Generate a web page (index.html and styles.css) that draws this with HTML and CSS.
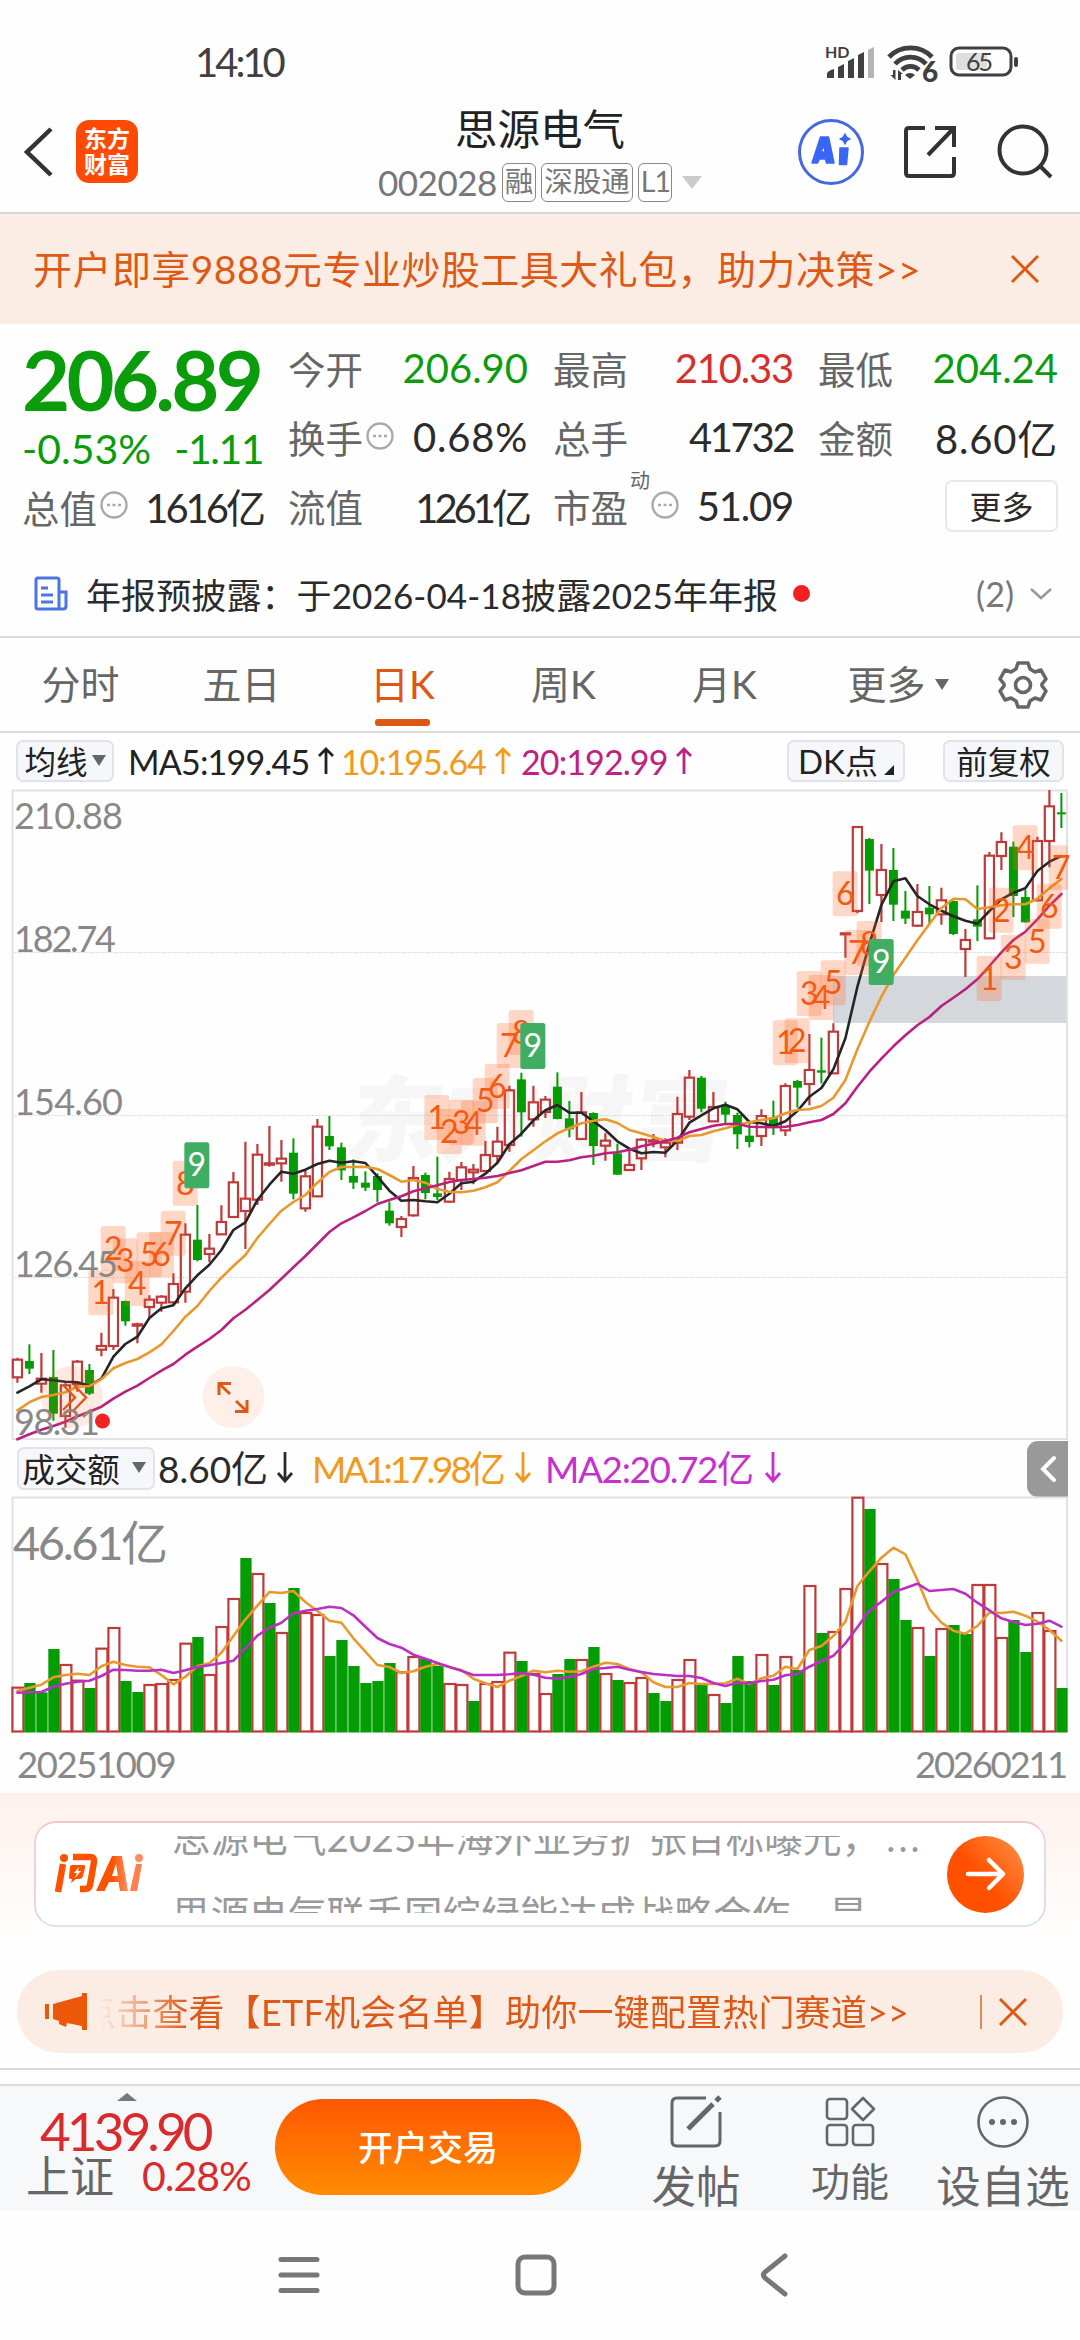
FILE: index.html
```html
<!DOCTYPE html>
<html lang="zh-CN">
<head>
<meta charset="utf-8">
<title>思源电气 002028</title>
<link rel="stylesheet" href="styles.css">
</head>
<body>
<div class="screen">
  <div class="status">
    <span class="clock">14:10</span>
    <svg class="status-icons" width="200" height="44" viewBox="820 40 200 44">
      <text x="825" y="58" class="hd">HD</text>
      <g fill="#404040">
        <path d="M827 74q0-3 7-5v9h-7zM838 67l6-3v14h-6zM848 61l6-3v20h-6zM858 55l6-3v26h-6z"/>
        <path d="M868 50l6-3v31h-6z" fill="#b5b5b5"/>
        <path d="M905 75l5 4 5-4a7 7 0 0 0-10 0z"/>
        <path d="M893 70h2.500v10l-5-5h2.500zM898 80v-10l5 4h-2v6z"/>
      </g>
      <g fill="none" stroke="#404040" stroke-width="4.800">
        <path d="M889 57a30 30 0 0 1 43 0"/><path d="M895 64a21 21 0 0 1 31 0"/><path d="M902 70a12 12 0 0 1 17 0"/>
      </g>
      <text x="922" y="82" class="six">6</text>
      <rect x="951" y="48" width="60" height="27" rx="8" fill="none" stroke="#404040" stroke-width="3"/>
      <rect x="956" y="53" width="31" height="17" rx="3" fill="#dedede"/>
      <rect x="1014" y="57" width="4" height="10" rx="2" fill="#404040"/>
      <text x="966" y="71" class="batt" textLength="27">65</text>
    </svg>
  </div>

  <header class="top">
    <svg class="back" width="34" height="54" viewBox="0 0 34 54"><path d="M30 4L6 27L30 50" fill="none" stroke="#333" stroke-width="4.500"/></svg>
    <div class="logo"><span>东方</span><span>财富</span></div>
    <div class="title">
      <h1>思源电气</h1>
      <div class="code"><span class="num">002028</span><i>融</i><i>深股通</i><i class="l1">L1</i><svg width="20" height="13" viewBox="0 0 20 13"><path d="M0 0H20L10 13z" fill="#ccc"/></svg></div>
    </div>
    <svg class="tools" width="260" height="70" viewBox="796 116 260 70">
      <circle cx="831" cy="152" r="31.500" fill="#fff" stroke="#4468e4" stroke-width="3"/>
      <g fill="#3967f5" stroke="#3967f5" stroke-width="1.500" stroke-linejoin="round"><path fill-rule="evenodd" d="M812 163l8.500-26h8l5.500 26h-7.500l-1-4h-6l-2 4zM821 152h4l-1-7z"/><path d="M840 148h8l-1.500 16.500h-7z"/><path d="M845 134q1 4 5 5q-4 1-5 5q-1-4-5-5q4-1 5-5z"/></g>
      <g fill="none" stroke="#333" stroke-width="4"><path d="M925 128H909q-3 0-3 3V173q0 3 3 3H951q3 0 3-3V157M935 128H954V147M953 129L928 155"/><circle cx="1023" cy="150" r="23.500"/><path d="M1039 165L1051 177"/></g>
    </svg>
  </header>

  <div class="promo"><span>开户即享9888元专业炒股工具大礼包，助力决策&gt;&gt;</span><svg width="30" height="30" viewBox="0 0 30 30"><path d="M2 2L28 28M28 2L2 28" stroke="#dd5a16" stroke-width="3"/></svg></div>

  <section class="quote">
    <div class="price">
      <b class="down">206.89</b>
      <div class="chg down"><span>-0.53%</span><span>-1.11</span></div>
      <div class="cell"><label>总值</label><svg class="dots" viewBox="0 0 28 28"><circle cx="14" cy="14" r="12.500"/><path d="M7 14h3M12.500 14h3M18 14h3"/></svg><em class="tighter">1616亿</em></div>
    </div>
    <div class="cells">
      <div class="cell"><label>今开</label><em class="down">206.90</em></div>
      <div class="cell"><label>最高</label><em class="up slim">210.33</em></div>
      <div class="cell"><label>最低</label><em class="down">204.24</em></div>
      <div class="cell"><label>换手</label><svg class="dots" viewBox="0 0 28 28"><circle cx="14" cy="14" r="12.500"/><path d="M7 14h3M12.500 14h3M18 14h3"/></svg><em class="loose">0.68%</em></div>
      <div class="cell"><label>总手</label><em class="tight">41732</em></div>
      <div class="cell"><label>金额</label><em class="loose">8.60亿</em></div>
      <div class="cell"><label>流值</label><em class="tightest">1261亿</em></div>
      <div class="cell"><label>市盈<sup>动</sup></label><svg class="dots" viewBox="0 0 28 28"><circle cx="14" cy="14" r="12.500"/><path d="M7 14h3M12.500 14h3M18 14h3"/></svg><em class="slim">51.09</em></div>
      <div class="cell end"><button class="more">更多</button></div>
    </div>
  </section>

  <div class="notice">
    <svg width="34" height="36" viewBox="0 0 34 36"><g fill="none" stroke="#4d74e4" stroke-width="3"><path d="M25 33V4q0-2-2-2H4q-2 0-2 2V31q0 2 2 2H29q3 0 3-3V16H25M7 12h7M7 19h12M7 26h12"/></g></svg>
    <span class="notice-text">年报预披露：于2026-04-18披露2025年年报</span><span class="dot"></span>
    <span class="count">(2)</span>
    <svg width="22" height="12" viewBox="0 0 22 12"><path d="M1 1L11 10L21 1" fill="none" stroke="#999" stroke-width="2.500"/></svg>
  </div>

  <nav class="tabs">
    <span>分时</span><span>五日</span><span class="on">日K</span><span>周K</span><span>月K</span>
    <span class="tab-more">更多<svg width="14" height="11" viewBox="0 0 14 11"><path d="M0 0H14L7 11z" fill="#666"/></svg></span>
    <svg class="gear" width="50" height="50" viewBox="-25 -25 50 50"><g fill="none" stroke="#666" stroke-width="3.600" stroke-linejoin="round"><circle r="7.500"/><path d="M-5-22H5L7-16L12-13L18-15L23-6L19-1V1L23 6L18 15L12 13L7 16L5 22H-5L-7 16L-12 13L-18 15L-23 6L-19 1V-1L-23-6L-18-15L-12-13L-7-16z"/></g></svg>
  </nav>

  <div class="ind">
    <span class="chip c1">均线<svg width="14" height="11" viewBox="0 0 14 11"><path d="M0 0H14L7 11z" fill="#666"/></svg></span>
    <span class="ma m5">MA5:199.45<svg class="arr" viewBox="0 0 16 28"><path d="M8 27V2M1 9L8 2L15 9"/></svg></span>
    <span class="ma m10">10:195.64<svg class="arr" viewBox="0 0 16 28"><path d="M8 27V2M1 9L8 2L15 9"/></svg></span>
    <span class="ma m20">20:192.99<svg class="arr" viewBox="0 0 16 28"><path d="M8 27V2M1 9L8 2L15 9"/></svg></span>
    <span class="chip c2">DK点<svg width="10" height="10" viewBox="0 0 10 10"><path d="M10 0V10H0z" fill="#222"/></svg></span>
    <span class="chip c3">前复权</span>
  </div>

  <svg id="kline" class="chart" width="1080" height="652" viewBox="0 789 1080 652"></svg>

  <div class="volhead">
    <span class="chip c4">成交额<svg width="14" height="11" viewBox="0 0 14 11"><path d="M0 0H14L7 11z" fill="#666"/></svg></span>
    <span class="ma v0">8.60亿<svg class="arr" viewBox="0 0 16 32"><path d="M8 1V30M1 22L8 30L15 22"/></svg></span>
    <span class="ma v1">MA1:17.98亿<svg class="arr" viewBox="0 0 16 32"><path d="M8 1V30M1 22L8 30L15 22"/></svg></span>
    <span class="ma v2">MA2:20.72亿<svg class="arr" viewBox="0 0 16 32"><path d="M8 1V30M1 22L8 30L15 22"/></svg></span>
    <span class="fold"><svg width="16" height="26" viewBox="0 0 16 26"><path d="M14 2L3 13L14 24" fill="none" stroke="#fff" stroke-width="4" stroke-linecap="round"/></svg></span>
  </div>
  <svg id="volume" class="chart" width="1080" height="238" viewBox="0 1496 1080 238"></svg>
  <div class="dates"><span>20251009</span><span class="to">20260211</span></div>

  <section class="ask">
    <div class="ask-card">
      <svg width="92" height="44" viewBox="53 1852 92 44">
        <defs><linearGradient id="g" x1="0" y1="0" x2="1" y2="0"><stop offset=".5" stop-color="#fb5200"/><stop offset="1" stop-color="#ff9060"/></linearGradient></defs>
        <g fill="none" stroke="#fb5200" stroke-width="6.500"><path d="M63 1864L58 1892"/><path d="M73 1857H90Q95 1857 94 1862L90 1885Q89 1889 85 1889H80"/></g>
        <circle cx="64" cy="1858" r="4" fill="#fb5200"/>
        <path d="M70 1867q0-2 2-2h11q3 0 2 3l-2 8q-1 3-4 3h-3l-5 4 1-4h-1q-3 0-2-3z" fill="#fb5200"/><path d="M79 1867l-5 6h3l-2 5 6-7h-3z" fill="#fff"/>
        <path fill="url(#g)" fill-rule="evenodd" d="M96 1891L112 1856H122L128 1891H120L118.500 1882H109L104.500 1891zM112 1876H118L116 1864z"/>
        <path d="M136 1864h6L137 1891h-7z" fill="#ff8048"/><circle cx="139" cy="1858" r="4" fill="#ff8c5c"/>
      </svg>
      <div class="ticker"><p>思源电气2025年海外业务扩张目标曝光，<span>...</span></p><p>思源电气联手国综绿能达成战略合作，是</p></div>
      <div class="go"><svg width="42" height="36" viewBox="0 0 42 36"><path d="M3 18H37M24 4L38 18L24 32" fill="none" stroke="#fff" stroke-width="4.500" stroke-linecap="round" stroke-linejoin="round"/></svg></div>
    </div>
    <div class="etf">
      <svg width="44" height="40" viewBox="0 0 44 40"><path fill="#ec5808" d="M0 12h4v15H0zM8 12L37 4V1h5v37h-5v-4l-15-3-1 4-7-3V29L8 27z"/></svg>
      <div class="etf-text">点击查看【ETF机会名单】助你一键配置热门赛道&gt;&gt;</div>
      <span class="bar"></span>
      <svg width="30" height="30" viewBox="0 0 30 30"><path d="M2 2L28 28M28 2L2 28" stroke="#dd5a16" stroke-width="3"/></svg>
    </div>
  </section>

  <footer class="bottom">
    <div class="index">
      <svg width="20" height="8" viewBox="0 0 20 8"><path d="M0 8L10 0L20 8z" fill="#777"/></svg>
      <div class="idx-value">4139.90</div>
      <div class="idx-row"><span>上证</span><em>0.28%</em></div>
    </div>
    <button class="trade">开户交易</button>
    <div class="act a1"><svg width="54" height="54" viewBox="0 0 54 54"><g fill="none" stroke="#666" stroke-width="3"><path d="M37 3H8Q3 3 3 8V46Q3 51 8 51H46Q51 51 51 46V17"/><path d="M19 34L44 9" stroke-width="5"/><path d="M47 6L51 2" stroke-width="5"/></g></svg><span>发帖</span></div>
    <div class="act a2"><svg width="54" height="54" viewBox="0 0 54 54"><g fill="none" stroke="#666" stroke-width="2.600"><rect x="4" y="4" width="20" height="20" rx="3"/><rect x="4" y="30" width="20" height="20" rx="3"/><rect x="30" y="30" width="20" height="20" rx="3"/><path d="M40 3L51 14L40 25L29 14z" stroke-linejoin="round"/></g></svg><span>功能</span></div>
    <div class="act a3"><svg width="54" height="54" viewBox="0 0 54 54"><circle cx="27" cy="27" r="24.500" fill="none" stroke="#666" stroke-width="2.600"/><g fill="#666"><circle cx="16" cy="27" r="3"/><circle cx="27" cy="27" r="3"/><circle cx="38" cy="27" r="3"/></g></svg><span>设自选</span></div>
  </footer>

  <div class="sysnav">
    <svg width="40" height="42" viewBox="0 0 40 42"><path d="M2 5.500H38M2 21H38M2 36.500H38"/></svg>
    <svg width="42" height="42" viewBox="0 0 42 42"><rect x="3" y="3" width="36" height="36" rx="7"/></svg>
    <svg width="28" height="42" viewBox="0 0 28 42"><path d="M25 2L5 18Q2 21 5 24L25 40"/></svg>
  </div>
</div>
<script src="chart.js"></script>
</body>
</html>
```
FILE: styles.css
```css
* { box-sizing: border-box; margin: 0; padding: 0; }
body { background: #fefefe; color: #2b2b2b; font-family: Lato, "Noto Sans CJK SC", sans-serif; }
em, i { font-style: normal; }
button { font-family: inherit; color: inherit; border: 0; }
svg { display: block; flex: none; overflow: visible; }
.screen { width: 1080px; height: 2340px; overflow: hidden; white-space: nowrap; }
.down { color: #0a9c0a; }
.up { color: #d6302e; }

.status { height: 100px; padding: 40px 60px 0 195px; display: flex; justify-content: space-between; }
.clock { font-size: 40px; line-height: 44px; color: #404040; letter-spacing: -3px; }
.status-icons text { fill: #404040; }
.hd { font: 700 16px Lato, sans-serif; }
.six { font: 900 28px Lato, sans-serif; }
.batt { font: 25px Lato, sans-serif; }

.top { height: 114px; border-bottom: 2px solid #d8d8d8; display: grid; grid-template-columns: 76px 62px 682px 236px; align-items: start; }
.back { margin: 25px 0 0 21px; }
.logo { width: 62px; height: 63px; margin-top: 20px; border-radius: 13px; background: #ff4a05; color: #fff; font-size: 23px; font-weight: 700; line-height: 26px; padding-top: 5px; text-align: center; display: flex; flex-direction: column; }
.title { width: 560px; margin-left: 122px; display: flex; flex-direction: column; align-items: center; }
.title h1 { font-weight: 400; font-size: 42.500px; line-height: 58px; color: #222; }
.code { display: flex; align-items: center; gap: 5px; font-size: 35px; line-height: 39px; margin-top: 5px; color: #777; }
.code .num { letter-spacing: -.5px; }
.code i { border: 1.5px solid #888; border-radius: 6px; font-size: 28.500px; line-height: 35px; height: 39px; padding: 0 2px; }
.code .l1 { letter-spacing: -1px; padding: 0 1px 0 2px; }
.code svg { margin-left: 5px; }
.tools { margin: 16px 0 0 -24px; width: 260px; }

.promo { height: 110px; padding: 0 40px 0 33px; display: flex; align-items: center; justify-content: space-between; background: #fcede4; color: #dd5a16; font-size: 39px; letter-spacing: .45px; }
.promo span { padding-bottom: 4px; }

.quote { height: 222px; display: grid; grid-template-columns: 241px 1fr; column-gap: 25px; padding: 9px 21px 0 22px; }
.price b { display: block; font-size: 83px; line-height: 92px; letter-spacing: -3.7px; font-weight: 700; }
.chg { display: flex; justify-content: space-between; font-size: 41px; line-height: 48px; margin-bottom: 8px; }
.chg span:last-child { letter-spacing: -1.5px; }
.cells { display: grid; grid-template-columns: 240px 240px 240px; column-gap: 25px; grid-template-rows: 69px 69px 69px; }
.cell { display: flex; align-items: center; height: 69px; font-size: 40px; }
.price .cell { height: 50px; }
.cell label { font-size: 37.500px; color: #666; position: relative; }
.cell sup { position: absolute; left: 77px; top: -10px; font-size: 20px; line-height: 24px; }
.cell em { margin-left: auto; }
.cell .loose { letter-spacing: .8px; }
.cell .slim { letter-spacing: -1.2px; }
.cell .tight { letter-spacing: -2.4px; }
.cell .tighter { letter-spacing: -3px; }
.cell .tightest { letter-spacing: -4px; }
.dots { width: 28px; height: 28px; margin: 0 0 2px 3px; fill: none; stroke: #aaa; stroke-width: 2.400; }
.cell label:has(sup) + .dots { margin-left: 23px; }
.end { justify-content: flex-end; }
.more { width: 113px; height: 52px; border: 2px solid #e8e8e8; border-radius: 7px; background: #fff; font-size: 32px; padding-bottom: 3px; }

.notice { height: 92px; border-bottom: 2px solid #dcdcdc; padding: 5px 28px 0 34px; display: flex; align-items: center; font-size: 35px; }
.notice-text { margin-left: 18px; letter-spacing: .1px; }
.dot { width: 17px; height: 17px; border-radius: 50%; background: #f22020; margin-left: 15px; }
.count { margin: 0 16px 0 auto; font-size: 34px; color: #777; }

.tabs { height: 95px; border-bottom: 2px solid #dcdcdc; display: grid; grid-template-columns: repeat(5, 161px) 170px 1fr; align-items: center; font-size: 39px; color: #666; }
.tabs > span { height: 93px; line-height: 93px; text-align: center; position: relative; }
.tabs .on { color: #dd5812; }
.on::after { content: ""; position: absolute; left: 53px; bottom: 5px; width: 55px; height: 7px; border-radius: 3px; background: #dd5812; }
.tabs .tab-more { display: flex; align-items: center; justify-content: center; gap: 9px; padding-left: 16px; }
.gear { margin-left: 23px; }

.ind { height: 56px; display: grid; grid-template-columns: 98px 199px 168px 171px 1fr auto; padding: 0 16px; align-items: center; font-size: 34px; }
.chip { height: 42px; border: 2px solid #e0e3ea; border-radius: 7px; background: #f6f7fa; display: flex; align-items: center; justify-content: center; font-size: 31.500px; color: #222; padding-bottom: 2px; }
.c1 { gap: 4px; }
.c2 { width: 118px; margin-left: 135px; gap: 6px; font-size: 33px; }
.c2 svg { align-self: flex-end; margin-bottom: 3px; }
.c3 { width: 121px; }
.ma { display: flex; align-items: center; }
.arr { width: 16px; height: 28px; fill: none; stroke: currentColor; stroke-width: 2.800; margin-left: 9px; }
.m5 { margin-left: 14px; letter-spacing: -.8px; color: #222; }
.m10 { margin-left: 28px; letter-spacing: -1.1px; color: #f09a20; }
.m20 { margin-left: 40px; letter-spacing: -.9px; color: #c0207e; }
.chart { overflow: hidden; }

.volhead { height: 55px; display: flex; align-items: center; padding-left: 17px; font-size: 37px; }
.c4 { width: 138px; gap: 12px; font-size: 32.500px; height: 43px; padding-right: 4px; }
.volhead .ma { padding-bottom: 3px; }
.volhead .arr { height: 32px; }
.v0 { width: 154px; margin-left: 3px; }
.v1 { width: 233px; color: #f09a20; letter-spacing: -3.1px; }
.v2 { color: #c82fcf; letter-spacing: -1.4px; }
.v1 .arr, .v2 .arr { margin-left: 12px; }
.fold { width: 41px; height: 56px; margin-left: auto; margin-right: 12px; border-radius: 11px 0 0 11px; background: #999; display: flex; align-items: center; justify-content: center; }
.dates { height: 59px; padding: 0 14px 0 17px; display: flex; justify-content: space-between; align-items: center; font-size: 36.500px; letter-spacing: -1.4px; color: #888; }
.dates .to { letter-spacing: -2.3px; }

.ask { height: 277px; padding: 28px 17px 0; background: linear-gradient(#fef1ec, #fefefe 150px); border-bottom: 2px solid #dadada; }
.ask-card { height: 106px; margin: 0 17px; border: 2px solid; border-color: #efc8c0 #e2dce4 #dbe5f0 #e6d6da; border-radius: 22px; background: #fff; padding: 0 20px 0 17px; display: flex; align-items: center; }
.ticker { width: 754px; height: 77px; overflow: hidden; margin-left: 27px; font-size: 38.500px; line-height: 77px; letter-spacing: .15px; color: #999; }
.ticker p:first-child { margin-top: -37px; }
.ticker p span { letter-spacing: 3px; margin-left: 6px; }
.go { width: 77px; height: 77px; margin-left: auto; border-radius: 50%; background: linear-gradient(50deg, #ff5000 45%, #ff9448); display: flex; align-items: center; justify-content: center; }
.etf { height: 83px; margin-top: 43px; border-radius: 42px; background: #fcede4; color: #dd5a16; display: flex; align-items: center; padding: 0 35px 0 28px; }
.etf-text { width: 880px; margin-left: 10px; padding-bottom: 3px; overflow: hidden; font-size: 36px; letter-spacing: .2px; text-indent: -19px; -webkit-mask-image: linear-gradient(90deg, transparent, #000 90px); mask-image: linear-gradient(90deg, transparent, #000 90px); }
.bar { width: 2px; height: 34px; margin: 0 16px 0 auto; background: #dd8a5a; }

.bottom { height: 126px; margin-top: 14px; border-top: 2px solid #dadada; background: #f7f8fa; color: #666; display: grid; grid-template-columns: 275px 306px 230px 78px 191px; }
.index { padding-top: 7px; display: flex; flex-direction: column; }
.index > svg { margin-left: 117px; }
.idx-value { margin: 6px 0 0 40px; font-size: 53px; line-height: 48px; letter-spacing: -3.9px; color: #d92b2b; }
.idx-row { display: flex; align-items: center; font-size: 44px; line-height: 42px; margin: 0 0 0 26px; }
.idx-row em { margin-left: 28px; font-size: 41px; color: #d92b2b; letter-spacing: -1px; }
.trade { height: 96px; margin-top: 13px; border-radius: 48px; background: linear-gradient(#ff5800, #ff8c00); color: #fff; font-size: 35px; font-weight: 500; padding-bottom: 3px; }
.act { display: flex; flex-direction: column; align-items: center; padding-top: 9px; font-size: 44.500px; line-height: 73px; }
.a2 span { font-size: 39px; line-height: 65px; }
.a3 { padding-left: 37px; }

.sysnav { height: 130px; display: grid; grid-template-columns: 236px 245px 1fr; align-items: center; padding-left: 279px; }
.sysnav svg { fill: none; stroke: #777; stroke-width: 5; stroke-linecap: round; }
```
FILE: chart.js
```js
// Chart geometry: day i is centred at X0 + i * STEP.
const X0 = 17.4, STEP = 12;
const RED = '#bd3b3a', GREEN = '#039c03';
const x = i => X0 + i * STEP;

// Each block lists values in thirds of a pixel below its own base line.
const blocks = [
  { base: 1100, k: `r773,779,832,848 g733,783,806,822 r759,836,851,878 g750,831,941,962 r850,856,948,983 r780,785,852,875 g792,810,881,885 r698,738,749,769 r567,593,738,750 g602,603,664,677 r668,673,677,730 r586,599,621,655 r586,590,608,635 r520,552,607,612 r370,404,575,608 g315,419,480,484 r402,446,462,487 r316,366,403,405 r216,247,351,354 r125,296,333,447 r132,164,299,315 r78,190,194,200 r120,176,190,245 g115,158,281,298 r210,229,325,335 r57,80,289,292 g48,108,139,150 g128,142,211,240 g178,228,248,267`,
    a: [878,859,838,841,845,847,857,836,770,732,710,654,625,616,565,526,494,450,390,367,300,254,215,221,209,192,182,188,184],
    b: [931,907,891,885,877,860,858,838,805,789,777,757,733,693,650,618,573,533,498,465,414,372,332,306,285,248,216,201,201],
    c: [1018,1003,989,978,965,949,935,920,896,875,857,834,812,792,764,740,717,690,655,629,600,570,536,502,468,432,396,370,352] },
  { base: 960, k: `g634,668,683,693 g640,648,690,727 g725,752,790,797 r768,777,801,831 r618,654,766,770 g638,645,699,718 g590,700,711,720 r635,657,725,728 r606,622,660,690 r612,629,637,673 r543,585,633,636 r500,545,588,610 r377,391,555,575 g338,358,457,530 r377,427,478,500 r408,419,456,474 g337,380,477,478 g423,475,508,532 r396,457,537,540 g457,459,558,615 r520,542,557,602 g551,580,644,645 r570,615,630,632 r535,539,595,630 r522,541,545,562 r535,548,562,592 r410,462,548,570 r330,353,470,480 g348,353,446,457 r396,441,484,486`,
    a: [609,650,692,722,720,724,727,701,670,665,641,608,553,521,481,451,435,458,458,484,510,544,566,580,576,578,542,488,466,445],
    b: [620,627,645,665,660,668,687,695,697,692,682,667,633,597,571,544,520,505,490,482,478,489,510,520,531,542,543,528,525,514],
    c: [753,732,720,709,694,685,676,666,660,657,653,648,639,631,618,605,605,601,592,587,580,577,569,559,551,543,533,517,507,497] },
  { base: 780, k: `g965,978,1004,1030 g998,1005,1063,1107 g1030,1067,1086,1102 r988,1008,1068,1098 g962,1012,1036,1065 r910,918,1051,1068 g900,903,923,983 r762,870,912,976 g773,871,878,910 r730,755,880,882 r458,460,463,533 r138,141,393,400 g174,177,272,372 r192,270,345,426 g204,270,374,423 g333,392,416,432 r312,396,437,441 g318,383,403,435 r323,361,403,434 g362,363,462,465 r447,480,507,591 g316,418,440,483 r216,227,475,478 r157,186,228,270 g185,200,348,411 g330,351,427,428 r170,183,361,364 r30,79,183,262 g39,97,101,144`,
    a: [974,988,1026,1030,1038,1024,993,950,924,868,775,620,492,375,304,295,348,373,392,409,422,431,393,358,338,325,273,245,228],
    b: [1045,1034,1027,1020,1015,1000,990,988,978,953,900,808,725,650,585,533,481,432,384,356,358,387,382,376,373,373,356,325,297],
    c: [1032,1031,1040,1041,1042,1040,1035,1027,1020,1002,970,920,875,836,799,766,736,711,678,653,628,598,558,517,480,455,418,377,342] }
];
const days = [], lines = { a: [], b: [], c: [] };
for (const { base, k, ...ma } of blocks) {
  for (const d of k.split(' ')) days.push([d[0], ...d.slice(1).split(',').map(v => base + v / 3)]);
  for (const n in ma) lines[n].push(...ma[n].map(v => base + v / 3));
}
const poly = (pts, color) => `<polyline points="${pts.map((y, i) => x(i).toFixed(1) + ',' + y.toFixed(1)).join(' ')}" fill="none" stroke="${color}" stroke-width="2.6" stroke-linejoin="round" stroke-linecap="round"/>`;

let s = '<rect x="833" y="976" width="234" height="47" fill="#d4d7dc"/>';
s += '<text x="342" y="1154" textLength="378" font-family="Noto Sans CJK SC" font-size="94" font-weight="900" fill="#f6f6f6" transform="translate(204 0) skewX(-10)">东方财富</text>';
for (const y of [952, 1115, 1277]) s += `<path d="M12 ${y}.5H1067" stroke="#d2d2d2" stroke-dasharray="1.5 1.5"/>`;
s += '<path d="M12.500 790.500H1067V1439H12.500z" fill="none" stroke="#e2e2e2" stroke-width="2"/>';

days.forEach(([c, hi, top, bot, lo], i) => {
  const cx = x(i);
  if (c === 'g') {
    s += `<rect x="${cx - 1}" y="${hi}" width="2" height="${lo - hi}" fill="${GREEN}"/><rect x="${cx - 4.5}" y="${top}" width="9" height="${Math.max(bot - top, 2)}" fill="${GREEN}"/>`;
  } else {
    s += `<path d="M${cx} ${hi}V${top}M${cx} ${bot}V${lo}" stroke="${RED}" stroke-width="2.2"/><rect x="${cx - 4.6}" y="${top}" width="9.2" height="${Math.max(bot - top, .5)}" fill="none" stroke="${RED}" stroke-width="2.2"/>`;
  }
});
s += poly(lines.a, '#252525') + poly(lines.b, '#e8992c') + poly(lines.c, '#b9217d');

// Sequence markers: [left, top] of each numbered tag, 1 to 9.
const tags = [
  [0, 1100, [[265,511],[302,378],[338,415],[374,483],[410,397],[447,396],[482,332],[518,182],[553,127]]],
  [360, 960, [[193,405],[230,447],[266,419],[302,422],[338,354],[374,312],[410,189],[446,150],[481,189]]],
  [720, 780, [[158,721],[194,715],[230,573],[266,585],[302,541],[338,274],[374,450],[410,423],[446,477]]],
  [720, 780, [[770,528],[806,323],[842,464],[878,136],[914,416],[950,311],[986,196]]]
];
for (const [ox, oy, list] of tags) list.forEach(([tx, ty], i) => {
  const px = ox + tx / 3, py = oy + ty / 3, nine = i === 8;
  s += `<rect x="${px}" y="${py}" width="${Math.min(25, 1068 - px)}" height="${nine ? 46 : 45}" rx="2.500" fill="${nine ? '#3fae62' : '#ff6420'}" ${nine ? '' : 'fill-opacity=".25"'}/>`;
  s += `<text x="${px + 12.5}" y="${py + 34}" text-anchor="middle" font-size="32" fill="${nine ? '#fff' : '#f25a12'}">${i + 1}</text>`;
});

const label = (t, y, w) => `<text x="14" y="${y}" font-size="36" textLength="${w}" fill="#888">${t}</text>`;
s += label('210.88', 829, 109) + label('182.74', 952, 102) + label('154.60', 1115, 109) + label('126.45', 1277, 104) + label('98.31', 1435, 86);
s += '<circle cx="72" cy="1397" r="31" fill="#fb7030" fill-opacity=".13"/><path d="M63 1385L75 1397.500L63 1410M74 1385L86 1397.500L74 1410" fill="none" stroke="#df5a18" stroke-width="2.500"/>';
s += '<circle cx="102.500" cy="1421" r="7.500" fill="#f02424"/>';
s += '<circle cx="233.500" cy="1397" r="31" fill="#fef0e8"/><path d="M219 1395V1383.500H231M220 1384.500L230 1394M247 1400V1411.500H235M246 1410.500L236 1401" fill="none" stroke="#dd5a16" stroke-width="3"/>';
document.getElementById('kline').innerHTML = s;

const vol = 'r773 g759 g787 g657 r705 r752 g774 r656 r594 g753 g786 r765 r762 r750 r641 g621 r735 r591 r507 g384 r432 g519 r609 g474 r549 r555 g678 g630 g708 g759 g753 g699 r727 r681 g687 g708 r762 r765 g813 r762 r756 r668 g693 r732 r792 g732 g687 r690 g651 r732 g750 r759 r744 g789 g813 r750 r690 g765 r795 g819 g678 g753 r675 g765 r681 g720 r468 g609 r606 r477 r203 g237 r402 g447 g570 r594 g678 r597 g585 g612 r465 r465 r624 g570 g666 r549 r603 g774'.split(' ');
const v1 = [783,773,764,742,735,731,735,709,695,705,710,712,735,763,740,708,700,668,618,568,527,486,489,483,516,543,572,578,625,665,705,711,729,724,710,702,711,720,746,760,771,752,738,722,727,722,725,724,710,698,702,717,727,757,771,771,759,762,762,760,746,762,745,737,710,717,660,648,618,575,468,424,383,353,373,450,537,578,602,611,588,547,549,545,557,575,600,632];
const v2 = [788,787,786,770,761,755,752,738,719,720,722,722,719,729,721,711,706,699,692,655,617,594,578,550,542,537,530,534,556,590,624,642,653,674,686,699,711,722,735,735,735,733,729,734,743,746,741,732,717,714,710,719,726,732,735,738,738,744,759,768,758,760,753,749,736,731,710,694,677,640,592,542,515,486,474,461,483,480,477,491,518,541,565,576,585,581,572,590];
const vy = v => 1430 + v / 3;
s = '<path d="M12.500 1733V1497.500H1067V1733" fill="none" stroke="#e2e2e2" stroke-width="2"/>';
s += '<text x="13" y="1560" font-size="47" textLength="155" fill="#888">46.61亿</text>';
vol.forEach((d, i) => {
  const top = vy(+d.slice(1)), cx = x(i) + .4;
  s += d[0] === 'g'
    ? `<rect x="${cx - 5.5}" y="${top}" width="11.300" height="${1732.5 - top}" fill="${GREEN}"/>`
    : `<rect x="${cx - 5.4}" y="${top}" width="11" height="${1731.5 - top}" fill="none" stroke="${RED}" stroke-width="2.200"/>`;
});
s += poly(v1.map(vy), '#e8992c') + poly(v2.map(vy), '#bb2fc4');
document.getElementById('volume').innerHTML = s;
```
